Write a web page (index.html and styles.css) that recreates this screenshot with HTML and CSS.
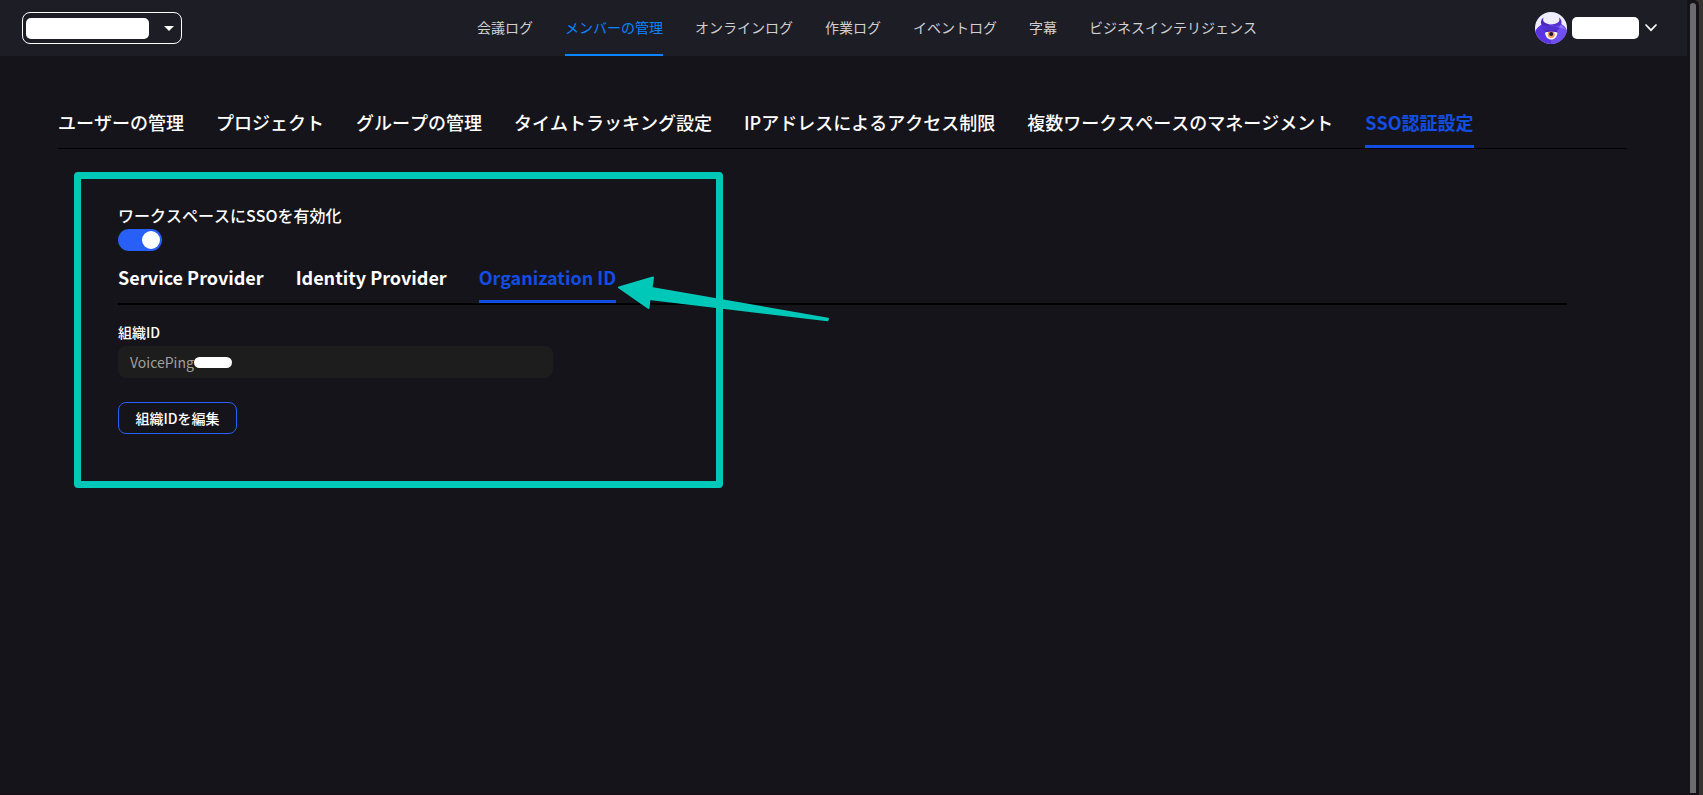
FILE: index.html
```
<!doctype html>
<html lang="ja">
<head>
    <meta charset="utf-8"/>
    <title>SSO認証設定</title>
    <link rel="stylesheet" href="styles.css">
</head>
<body>

<div class="window">
    <div class="page">
        <header class="topbar">
            <div class="workspace">
                <span class="workspace-name"></span>
                <span class="caret"></span>
            </div>
            <nav class="nav">
                <a>会議ログ</a>
                <a class="active">メンバーの管理</a>
                <a>オンラインログ</a>
                <a>作業ログ</a>
                <a>イベントログ</a>
                <a>字幕</a>
                <a>ビジネスインテリジェンス</a>
            </nav>
            <div class="user">
                <svg class="avatar" viewBox="0 0 32 32">
                    <clipPath id="round"><circle cx="16" cy="16" r="16"/></clipPath>
                    <g clip-path="url(#round)">
                        <rect width="32" height="32" fill="#efecfb"/>
                        <path d="M16 12.500L26 12Q32 15 32 21V32H0V21Q0 17 6.500 12.500Z" fill="#5c33e0"/>
                        <path d="M16 12.500L26 12Q32 15 32 21V32H16Z" fill="#6f4ff0"/>
                        <path d="M8.500 5.500C6 7.500 5.200 10 6.500 13L12 14.500L15 12.800L10.500 11C8 10 7.700 8 8.500 5.500Z" fill="#4d27bd"/>
                        <path d="M24 5.500C26.500 7.500 27.300 10 26 13L20.500 14.500L17.500 12.800L22 11C24.500 10 24.800 8 24 5.500Z" fill="#5630cc"/>
                        <path d="M7 16L16 13.500L25 16L22 19H10Z" fill="#5230d0"/>
                        <path d="M26 12.500L31 17.500L24 15.500Z" fill="#8d74f8"/>
                        <path d="M10 20.500Q16 18.500 22.500 20.500C22 25 19.500 27.500 16.200 27.500S10.500 25 10 20.500Z" fill="#fff"/>
                        <circle cx="16.200" cy="22.500" r="3.600" fill="#ee9a5c"/>
                        <circle cx="16.200" cy="22" r="2" fill="#21152e"/>
                        <path d="M9.500 20.500Q16 18.500 23 20.500L21 18.500H11.500Z" fill="#4a20ba"/>
                    </g>
                </svg>
                <span class="user-name"></span>
                <svg class="chevron" viewBox="0 0 12 8"><path d="M1 1L6 6.200L11 1"/></svg>
            </div>
        </header>

        <main class="main">
            <div class="tabs">
                <a>ユーザーの管理</a>
                <a>プロジェクト</a>
                <a>グループの管理</a>
                <a>タイムトラッキング設定</a>
                <a>IPアドレスによるアクセス制限</a>
                <a>複数ワークスペースのマネージメント</a>
                <a class="active">SSO認証設定</a>
            </div>

            <section class="sso">
                <div class="switch-label">ワークスペースにSSOを有効化</div>
                <div class="switch"></div>
                <div class="tabs sub">
                    <a>Service Provider</a>
                    <a>Identity Provider</a>
                    <a class="active">Organization ID</a>
                </div>
                <div class="label">組織ID</div>
                <div class="field">VoicePing<span class="mask"></span></div>
                <button class="edit">組織IDを編集</button>
            </section>
        </main>
    </div>
    <div class="scrollbar"><div class="thumb"></div></div>
</div>

<div class="highlight"></div>
<svg class="arrow" viewBox="0 0 220 44">
    <path d="M5 14L39 4L37.500 14.500L214 45.200L213.500 46.800L35.500 25.500L34.500 34.500Z" transform="translate(0 -0.500)"/>
</svg>

</body>
</html>
```
FILE: styles.css
```
* {
    box-sizing: border-box;
}
body {
    margin: 0;
    height: 795px;
    overflow: hidden;
    position: relative;
    background: #393330;
    color: #fff;
    font-family: "Noto Sans CJK JP", sans-serif;
    font-kerning: none;
}
.window {
    display: flex;
    width: 1699px;
    height: 795px;
    background: #141318;
    border-bottom: 2px solid #170f18;
    border-top-right-radius: 5px;
    overflow: hidden;
}
.page {
    width: 1687px;
    background: #15141a;
}
.topbar {
    display: grid;
    grid-template-columns: 455px auto 1fr;
    align-items: center;
    height: 56px;
    padding: 0 30px 0 22px;
    background: #1d1d26;
}
.workspace {
    display: flex;
    align-items: center;
    justify-content: space-between;
    width: 160px;
    height: 32px;
    padding: 0 7px 0 3px;
    border: 1px solid #fff;
    border-radius: 8px;
}
.workspace-name {
    width: 123px;
    height: 21px;
    border-radius: 5px;
    background: #fff;
}
.caret {
    border: 5px solid transparent;
    border-top-color: #fff;
    border-bottom: 0;
}
.nav {
    display: flex;
    gap: 32px;
    height: 56px;
    font-size: 14px;
    line-height: 55px;
    color: #d0d0d2;
}
.nav .active {
    color: #0a84ff;
    box-shadow: inset 0 -2px #0a84ff;
}
.user {
    display: flex;
    align-items: center;
    justify-self: end;
}
.avatar {
    width: 32px;
    height: 32px;
}
.user-name {
    width: 67px;
    height: 22px;
    margin: 0 6px 0 5px;
    border-radius: 5px;
    background: #fff;
}
.chevron {
    width: 12px;
    height: 8px;
    fill: none;
    stroke: #fff;
    stroke-width: 1.7;
    stroke-linecap: round;
}
.main {
    padding: 54px 60px 0 58px;
}
.tabs {
    display: flex;
    gap: 32px;
    border-bottom: 1px solid #000;
    font-size: 18px;
    font-weight: 500;
    line-height: 24px;
    white-space: nowrap;
}
.tabs a {
    padding-bottom: 11px;
    border-bottom: 3px solid transparent;
}
.tabs .active {
    color: #134ee3;
    border-color: #134ee3;
    font-weight: 700;
}
.sso {
    padding: 56px 60px 0;
}
.switch-label {
    padding-bottom: 3px;
    font-size: 16px;
    font-weight: 500;
    line-height: 21px;
}
.switch {
    width: 44px;
    height: 22px;
    padding: 2px;
    border-radius: 11px;
    background: #285ff6;
}
.switch::after {
    content: "";
    display: block;
    width: 18px;
    height: 18px;
    margin-left: auto;
    border-radius: 50%;
    background: #fff;
}
.sub {
    margin-top: 14px;
    border-bottom-width: 2px;
    font-weight: 700;
    font-kerning: normal;
}
.label {
    margin-top: 17px;
    font-size: 14px;
    font-weight: 500;
    line-height: 20px;
}
.field {
    display: flex;
    align-items: center;
    width: 435px;
    height: 32px;
    margin-top: 4px;
    padding: 0 12px;
    border-radius: 8px;
    background: #1d1d1d;
    color: #a0a0a0;
    font-size: 14px;
    font-kerning: normal;
}
.mask {
    width: 38px;
    height: 11px;
    margin-top: 1px;
    border-radius: 6px;
    background: #fff;
}
.edit {
    display: block;
    width: 119px;
    height: 32px;
    margin-top: 24px;
    padding: 0;
    border: 1px solid #285ff6;
    border-radius: 8px;
    background: none;
    color: #fff;
    font: 500 14px "Noto Sans CJK JP", sans-serif;
}
.scrollbar {
    width: 12px;
    padding: 3px 3px 0;
}
.thumb {
    height: 792px;
    border-radius: 3px 3px 0 0;
    background: #6c6b70;
}

/* callout drawn over the page */
.highlight {
    position: absolute;
    left: 74px;
    top: 172px;
    width: 649px;
    height: 316px;
    border: 7px solid #00c8b8;
    border-radius: 4px;
}
.arrow {
    position: absolute;
    left: 614px;
    top: 274px;
    width: 220px;
    height: 44px;
    overflow: visible;
    fill: #00c8b8;
    stroke: #00c8b8;
    stroke-width: 2;
    stroke-linejoin: round;
}
```
